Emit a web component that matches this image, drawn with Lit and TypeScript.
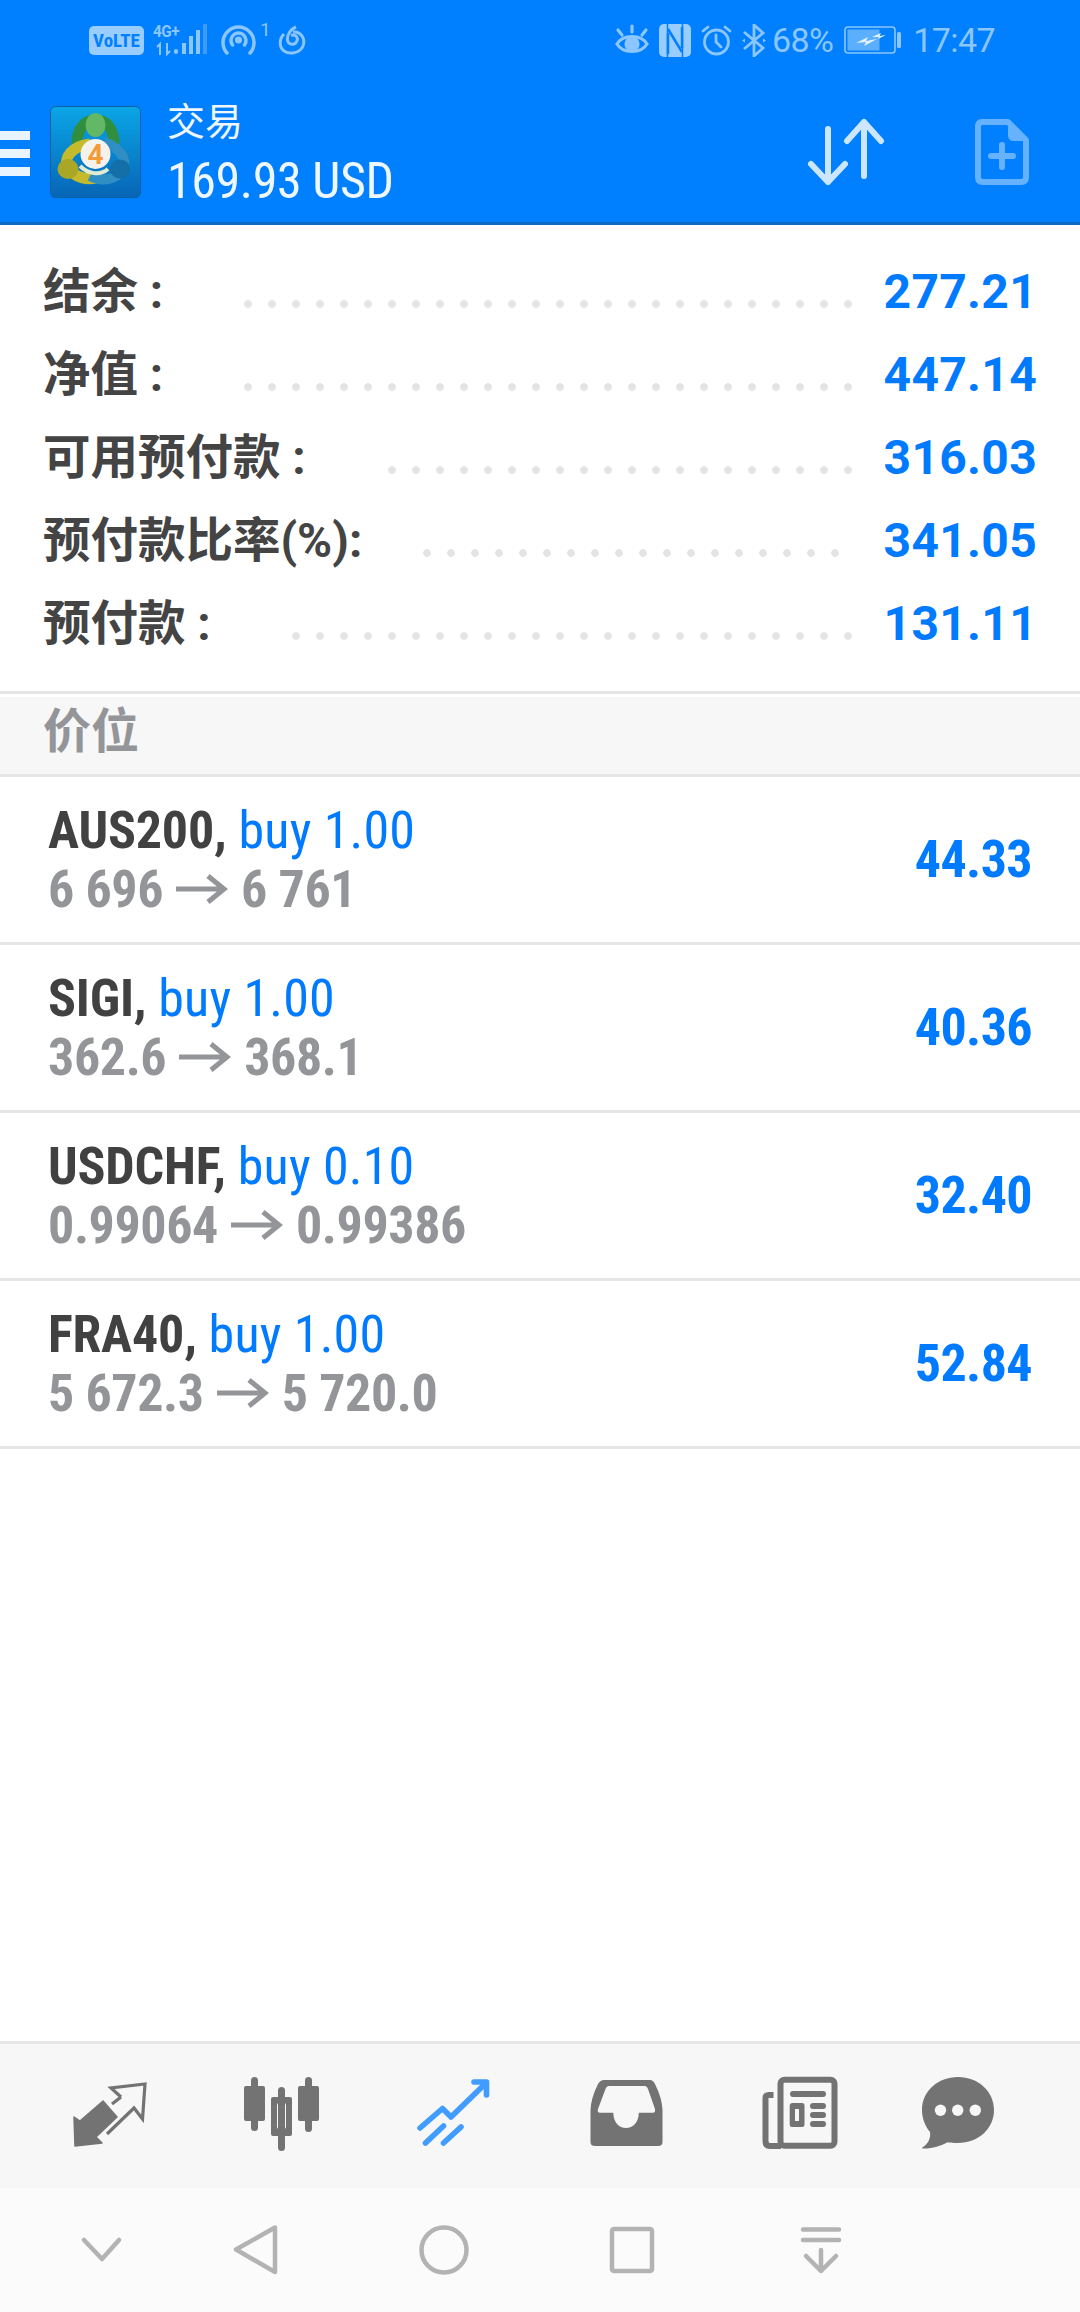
import { LitElement, html, css, svg } from 'lit';
import { customElement } from 'lit/decorators.js';

const SUMMARY = [
	{ label: '结余 :', value: '277.21', start: 248, end: 848 },
	{ label: '净值 :', value: '447.14', start: 248, end: 848 },
	{ label: '可用预付款 :', value: '316.03', start: 392, end: 848 },
	{ label: '预付款比率(%):', value: '341.05', start: 427, end: 835 },
	{ label: '预付款 :', value: '131.11', start: 296, end: 848 }
];

const POSITIONS = [
	{ symbol: 'AUS200,', deal: 'buy 1.00', open: '6 696', close: '6 761', profit: '44.33' },
	{ symbol: 'SIGI,', deal: 'buy 1.00', open: '362.6', close: '368.1', profit: '40.36' },
	{ symbol: 'USDCHF,', deal: 'buy 0.10', open: '0.99064', close: '0.99386', profit: '32.40' },
	{ symbol: 'FRA40,', deal: 'buy 1.00', open: '5 672.3', close: '5 720.0', profit: '52.84' }
];

const TAB_ICONS = [
	svg`<path d="M4 43 10 47 33 27 47 43 26 63 32 69 5 72Z" fill="#737373" stroke="#737373" stroke-width="1.5" stroke-linejoin="round"/>
		<path d="M51 23 42 30M51 23 41 14 75 10 72.500 45 64 34 37 60" fill="none" stroke="#737373" stroke-width="3.200"/>`,
	svg`<g fill="#737373">
		<rect x="2" y="12" width="21" height="35" rx="2"/><rect x="9" y="3" width="7" height="54" rx="3.5"/>
		<rect x="56" y="12" width="21" height="35" rx="2"/><rect x="63" y="3" width="7" height="55" rx="3.5"/>
		<rect x="36" y="13" width="7" height="64" rx="3.5"/>
		<path fill-rule="evenodd" d="M31 23H48Q50 23 50 25V60Q50 62 48 62H31Q29 62 29 60V25Q29 23 31 23ZM37 29Q35 29 35 31V53Q35 55 37 55H42Q44 55 44 53V31Q44 29 42 29Z"/>
	</g>`,
	svg`<g fill="none" stroke="#409cff" stroke-width="5.6" stroke-linecap="round" stroke-linejoin="round">
		<path d="M6 54 28.500 34.500 37 43 71 10M60 8H72.500V21"/>
		<path d="M11.500 69 29.500 52M29.500 69 47 53"/>
	</g>`,
	svg`<path fill="#737373" fill-rule="evenodd" d="M18 6H64Q67 6 69 10Q76 24 76.500 36V68Q76.500 72 72 72H9Q4.500 72 4.500 68V36Q5 24 12 10Q14.500 6 18 6ZM23 12H59Q61 12 62 15L69 35Q69.500 38.700 67 38.700H52.800C52.800 48 47 54 40 54C33 54 27.300 48 27.300 38.700H14Q11 38.700 12 35L19.500 15Q20.500 12 23 12Z"/>`,
	svg`<g fill="none" stroke="#737373" stroke-width="6">
		<rect x="20.500" y="5.700" width="54" height="66" rx="4"/>
		<path d="M13.500 21H9Q5.500 21 5.500 24V67Q5.500 72 10 72H21"/>
	</g>
	<g fill="#737373">
		<rect x="30" y="17" width="36" height="6" rx="3"/>
		<path fill-rule="evenodd" d="M32 29H42Q44.500 29 44.500 31.500V50.500Q44.500 53 42 53H32Q29.700 53 29.700 50.500V31.500Q29.700 29 32 29ZM35 35V47H39V35Z"/>
		<rect x="50" y="29" width="16" height="6" rx="3"/><rect x="50" y="38" width="16" height="6" rx="3"/><rect x="50" y="47" width="16" height="6" rx="3"/>
	</g>`,
	svg`<path fill="#737373" d="M41 3C61 3 77 17 77 36C77 55 61 69 41 69C37 69 33 69 30.500 68.300C24 72 14 75 5.500 74.500C5 74 5 73.500 6 73C11 70 14 64 13 58C8 52 5 44 5 36C5 17 21 3 41 3Z"/>
	<g fill="#f7f7f7"><circle cx="23.500" cy="36.300" r="5.700"/><circle cx="40.700" cy="36.300" r="5.700"/><circle cx="58.300" cy="36.300" r="5.700"/></g>`
];

const NAV_ICONS = [
	svg`<path d="M12 20 30 39 47 20"/>`,
	svg`<path d="M49 7.500 10 29.500 49 52Z"/>`,
	svg`<circle cx="30" cy="30" r="22.500"/>`,
	svg`<rect x="10" y="9" width="40" height="42" rx="2"/>`,
	svg`<path d="M12 9.500H48M12 20H48M30 30V51M15 36 30 51 45 36"/>`
];

@customElement('app-root')
export class AppRoot extends LitElement {
	static styles = css`
		:host {
			display: flex;
			flex-direction: column;
			width: 1080px;
			height: 2312px;
			background: #fff;
			overflow: hidden;
			font-family: Roboto, 'Noto Sans CJK SC', sans-serif;
		}

		svg {
			display: block;
			flex: none;
		}

		/* status bar */
		.status {
			display: flex;
			align-items: center;
			height: 75px;
			box-sizing: border-box;
			padding: 5px 85px 0 89px;
			background: #007fff;
			color: #8cc6ff;
			font-size: 34px;
			letter-spacing: -0.6px;
		}

		.volte {
			width: 55px;
			height: 29px;
			border-radius: 5px;
			background: #99ccff;
			color: #007fff;
			font-size: 19px;
			font-weight: 700;
			font-stretch: 75%;
			line-height: 29px;
			text-align: center;
			letter-spacing: 0;
		}

		.signal {
			margin-left: 9px;
		}

		.hotspot {
			margin-left: 8px;
		}

		.sim {
			margin: -22px 0 0 4px;
			width: 14px;
			font-size: 19px;
			letter-spacing: 0;
		}

		.swirl {
			margin-left: 4px;
		}

		.status-right {
			display: flex;
			align-items: center;
			margin-left: auto;
		}

		.status-right .nfc {
			margin-left: 10px;
		}

		.status-right .alarm {
			margin-left: 10px;
		}

		.status-right .bt {
			margin-left: 10px;
		}

		.battery-level {
			margin-left: 6px;
		}

		.battery {
			margin-left: 11px;
		}

		.clock {
			margin-left: 12px;
		}

		/* toolbar */
		.toolbar {
			display: flex;
			align-items: center;
			height: 150px;
			box-sizing: border-box;
			padding: 6px 51px 0 0;
			background: #007fff;
			border-bottom: 3px solid #0a6cc4;
		}

		.menu {
			display: flex;
			flex-direction: column;
			gap: 9px;
			width: 30px;
			margin-top: 4px;
		}

		.menu span {
			height: 9px;
			background: #e8f4ff;
		}

		.logo {
			margin-left: 20px;
		}

		.account {
			margin-left: 26px;
			color: #eef7ff;
		}

		.account-title {
			font-size: 38px;
			line-height: 50px;
			font-family: 'Noto Sans CJK SC', sans-serif;
		}

		.account-balance {
			margin-top: 9px;
			font-size: 50px;
			line-height: 56px;
			font-stretch: 75%;
			letter-spacing: -0.4px;
		}

		.sort {
			margin-left: auto;
		}

		.add {
			margin-left: 86px;
		}

		/* summary */
		.summary {
			padding: 25px 0 26px;
			border-bottom: 3px solid #e6e6e6;
		}

		.line {
			display: flex;
			align-items: center;
			height: 83px;
			padding: 0 43px;
			box-sizing: border-box;
			position: relative;
		}

		.line-label {
			margin-bottom: 8px;
			color: #444;
			font-size: 47.5px;
			font-weight: 700;
		}

		.line-value {
			margin-left: auto;
			color: #007aff;
			font-size: 48px;
			font-weight: 700;
			letter-spacing: 0.3px;
		}

		.dots {
			position: absolute;
			top: 50px;
			height: 8px;
			background: radial-gradient(circle at 4px 4px, #e4e4e4 3.6px, transparent 4px) 0 0 / 24px 8px repeat-x;
		}

		/* positions */
		.section {
			margin-top: 3px;
			height: 80px;
			box-sizing: border-box;
			padding-left: 43px;
			background: #f7f7f7;
			color: #939598;
			font-size: 48px;
			font-weight: 700;
			line-height: 70px;
			border-bottom: 3px solid #e6e6e6;
		}

		.row {
			display: flex;
			align-items: center;
			height: 168px;
			box-sizing: border-box;
			padding: 0 48px;
			border-bottom: 3px solid #e6e6e6;
			font-size: 52px;
			line-height: 59px;
			font-stretch: 75%;
		}

		.symbol {
			color: #414141;
			font-weight: 700;
			letter-spacing: -0.2px;
		}

		.deal {
			color: #007aff;
			letter-spacing: 0.2px;
		}

		.prices {
			display: flex;
			align-items: center;
			color: #939598;
			font-weight: 700;
			letter-spacing: -0.4px;
		}

		.prices svg {
			margin: 0 13px;
		}

		.profit {
			margin-left: auto;
			color: #007aff;
			font-weight: 700;
			letter-spacing: -0.6px;
		}

		/* bottom bars */
		.tabs {
			display: grid;
			grid-template-columns: 172px 172px 172px 174px 157px 80px;
			align-items: start;
			height: 147px;
			box-sizing: border-box;
			margin-top: auto;
			padding: 30px 0 0 70px;
			background: #f7f7f7;
			border-top: 3px solid #e6e6e6;
		}

		.nav {
			display: grid;
			grid-template-columns: 154px 188px 188px 189px 60px;
			height: 124px;
			box-sizing: border-box;
			padding: 32px 0 0 72px;
			background: #fbfbfb;
		}

		.nav svg {
			fill: none;
			stroke: #b3b3b3;
			stroke-width: 4.500;
			stroke-linecap: round;
			stroke-linejoin: round;
		}
	`;

	renderStatus() {
		return html`
			<div class="status">
				<div class="volte">VoLTE</div>
				<svg class="signal" width="60" height="34" viewBox="0 0 60 34" fill="#8cc6ff">
					<text x="0" y="14" font-size="17" font-weight="700" font-family="Roboto" textLength="26" lengthAdjust="spacingAndGlyphs">4G+</text>
					<path d="M7 32V21L4 24M14 20V31L17 28" fill="none" stroke="#8cc6ff" stroke-width="2"/>
					<rect x="21" y="26" width="4" height="5" rx="2"/><rect x="29" y="20" width="4" height="11"/>
					<rect x="36" y="13" width="4" height="18"/><rect x="43" y="7" width="4" height="24"/>
					<rect x="50" y="1" width="4" height="30" fill="#3d9bff"/>
				</svg>
				<svg class="hotspot" width="35" height="30" viewBox="0 0 35 30" fill="none" stroke="#8cc6ff" stroke-width="3.500" stroke-linecap="round">
					<path d="M6 28A15.500 15.500 0 1 1 29 28"/>
					<path d="M11.500 20A7.500 7.500 0 1 1 23.500 20"/>
					<circle cx="17.500" cy="15" r="1.800" fill="#8cc6ff"/>
				</svg>
				<span class="sim">1</span>
				<svg class="swirl" width="28" height="30" viewBox="0 0 28 30" fill="none" stroke="#8cc6ff" stroke-width="3">
					<path d="M18 2C13 4 9 9 9.500 15C10 20 17 21 19 16C20.500 12 17 9 13 10.500M6 9C1 14 1 22 6 26C12 30 22 28 25 21C28 13 22 6 15 7"/>
				</svg>
				<div class="status-right">
					<svg width="34" height="32" viewBox="0 0 34 32" fill="none" stroke="#8cc6ff" stroke-width="3.200" stroke-linecap="round">
						<path d="M2 20C8 10 26 10 32 20C26 30 8 30 2 20Z"/>
						<circle cx="17" cy="20" r="6" fill="#8cc6ff"/>
						<path d="M17 2V8M3 6 7 11M31 6 27 11"/>
					</svg>
					<svg class="nfc" width="32" height="33" viewBox="0 0 32 33">
						<rect width="32" height="33" rx="5" fill="#99ccff"/>
						<path d="M8.500 0V33M23.500 0V33" stroke="#007fff" stroke-width="1.500"/>
						<path d="M9 5 23 28M9 9V30M23 3V24" fill="none" stroke="#007fff" stroke-width="2.500"/>
					</svg>
					<svg class="alarm" width="31" height="31" viewBox="0 0 31 31" fill="none" stroke="#8cc6ff" stroke-width="2.800" stroke-linecap="round">
						<circle cx="15.500" cy="17" r="12"/>
						<path d="M15 10V17L20 22M2 6 7 2M29 6 24 2"/>
					</svg>
					<svg class="bt" width="24" height="33" viewBox="0 0 24 33" fill="none" stroke="#8cc6ff" stroke-width="2.800">
						<path d="M2 8 21 24 12 32V1L21 9 2 25"/>
						<path d="M0 16.500 3 14.500V18.500ZM24 16.500 21 14.500V18.500Z" fill="#8cc6ff" stroke="none"/>
					</svg>
					<span class="battery-level">68%</span>
					<svg class="battery" width="57" height="28" viewBox="0 0 57 28">
						<rect x="1" y="1" width="50" height="26" rx="3" fill="none" stroke="#8cc6ff" stroke-width="1.600"/>
						<rect x="3.500" y="3.500" width="32" height="21" fill="#5cafff"/>
						<rect x="53" y="6" width="4" height="16" rx="1.500" fill="#8cc6ff"/>
						<path d="M12 17 24 11 22 15 33 13 20 20 22 16Z" fill="#e3f1ff"/>
						<path d="M28 11 37 7 35.500 10 42 9 34 13 35 11Z" fill="#e3f1ff"/>
					</svg>
					<span class="clock">17:47</span>
				</div>
			</div>
		`;
	}

	renderLogo() {
		return html`
			<svg class="logo" width="91" height="92" viewBox="0 0 91 92">
				<defs>
					<linearGradient id="tile" x1="0" y1="0" x2="0" y2="1">
						<stop offset="0" stop-color="#0aa6e6" />
						<stop offset="1" stop-color="#0765b6" />
					</linearGradient>
				</defs>
				<rect x="0.500" y="0.500" width="90" height="91" rx="5" fill="url(#tile)" stroke="#0a5fa8" />
				<path d="M27 38C27 22 35 14 45.500 14C56 14 64 22 64 38" fill="none" stroke="#2f8f3e" stroke-width="11" />
				<ellipse cx="45.500" cy="19" rx="10" ry="12" fill="#62b866" />
				<path d="M40 38C22 40 13 52 18 61C24 72 38 75 50 71" fill="none" stroke="#c4ba2c" stroke-width="11" />
				<ellipse cx="18" cy="63" rx="10.500" ry="10" fill="#aaa726" />
				<path d="M54 36C71 42 78 54 72 64C66 74 52 76 40 70" fill="none" stroke="#2f8fc4" stroke-width="10" />
				<path d="M30 60C38 68 50 70 58 63" fill="none" stroke="#dfeccf" stroke-width="4" />
				<ellipse cx="70" cy="63" rx="10" ry="9.500" fill="#146fa9" />
				<circle cx="45.500" cy="48" r="15" fill="#f5f2ec" />
				<text x="45.500" y="58" text-anchor="middle" font-family="Roboto" font-size="28" font-weight="700" fill="#f39a3a">4</text>
			</svg>
		`;
	}

	renderToolbar() {
		return html`
			<div class="toolbar">
				<div class="menu"><span></span><span></span><span></span></div>
				${this.renderLogo()}
				<div class="account">
					<div class="account-title">交易</div>
					<div class="account-balance">169.93 USD</div>
				</div>
				<svg class="sort" width="84" height="70" viewBox="0 0 84 70" fill="none" stroke="#cde6ff" stroke-width="6" stroke-linecap="round" stroke-linejoin="round">
					<path d="M23 12V65M6 47 23 65 40 47" />
					<path d="M59 5V59M42 24 59 5 76 24" />
				</svg>
				<svg class="add" width="54" height="70" viewBox="0 0 54 70" fill="none" stroke="#66b2ff">
					<path d="M7 5H33L51 23V60Q51 65 46 65H8Q3 65 3 60V10Q3 5 7 5Z" stroke-width="6" stroke-linejoin="round" />
					<path d="M33 4V18Q33 24 39 24H52L34 4Z" fill="#66b2ff" stroke="none" />
					<path d="M27 28V50M16 39H38" stroke-width="6" stroke-linecap="round" />
				</svg>
			</div>
		`;
	}

	renderSummary() {
		return html`
			<div class="summary">
				${SUMMARY.map(
					(line) => html`
						<div class="line">
							<span class="line-label">${line.label}</span>
							<span
								class="dots"
								style="left:${line.start - 4}px;width:${line.end - line.start + 8}px"
							></span>
							<span class="line-value">${line.value}</span>
						</div>
					`
				)}
			</div>
		`;
	}

	renderPositions() {
		return html`
			<div class="section">价位</div>
			${POSITIONS.map(
				(item) => html`
					<div class="row">
						<div>
							<div><span class="symbol">${item.symbol}</span> <span class="deal">${item.deal}</span></div>
							<div class="prices">
								${item.open}
								<svg width="52" height="30" viewBox="0 0 52 30" fill="none" stroke="#939598" stroke-width="5">
									<path d="M0 15H48M32 2 48 15 32 28" />
								</svg>
								${item.close}
							</div>
						</div>
						<span class="profit">${item.profit}</span>
					</div>
				`
			)}
		`;
	}

	render() {
		return html`
			${this.renderStatus()} ${this.renderToolbar()} ${this.renderSummary()} ${this.renderPositions()}
			<div class="tabs">
				${TAB_ICONS.map((icon) => html`<svg width="80" height="80" viewBox="0 0 80 80">${icon}</svg>`)}
			</div>
			<div class="nav">
				${NAV_ICONS.map((icon) => html`<svg width="60" height="60" viewBox="0 0 60 60">${icon}</svg>`)}
			</div>
		`;
	}
}
